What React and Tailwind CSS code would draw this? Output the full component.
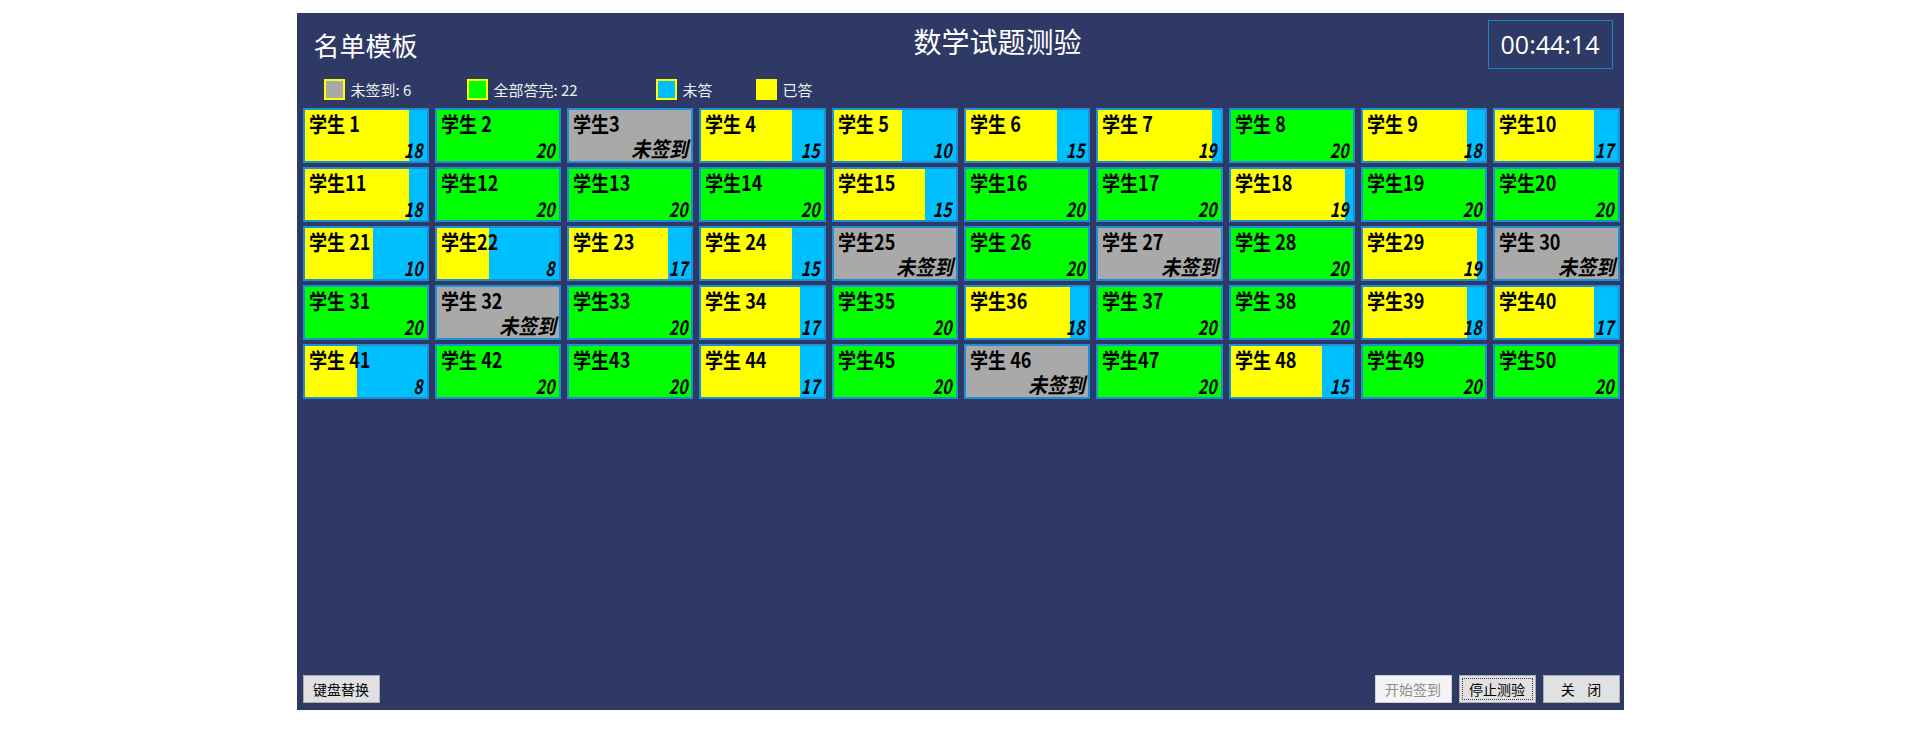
import React from "react";

const CJK = { fontFamily: '"Noto Sans CJK SC", "Noto Sans", sans-serif' };

// width of the yellow "answered" bar inside a card, by score
const barWidth = { 8: 52, 10: 68, 15: 91, 17: 99, 18: 104, 19: 114 };

const students = [
  ["学生 1", "y", 18], ["学生 2", "g", 20], ["学生3", "x"], ["学生 4", "y", 15], ["学生 5", "y", 10],
  ["学生 6", "y", 15], ["学生 7", "y", 19], ["学生 8", "g", 20], ["学生 9", "y", 18], ["学生10", "y", 17],
  ["学生11", "y", 18], ["学生12", "g", 20], ["学生13", "g", 20], ["学生14", "g", 20], ["学生15", "y", 15],
  ["学生16", "g", 20], ["学生17", "g", 20], ["学生18", "y", 19], ["学生19", "g", 20], ["学生20", "g", 20],
  ["学生 21", "y", 10], ["学生22", "y", 8], ["学生 23", "y", 17], ["学生 24", "y", 15], ["学生25", "x"],
  ["学生 26", "g", 20], ["学生 27", "x"], ["学生 28", "g", 20], ["学生29", "y", 19], ["学生 30", "x"],
  ["学生 31", "g", 20], ["学生 32", "x"], ["学生33", "g", 20], ["学生 34", "y", 17], ["学生35", "g", 20],
  ["学生36", "y", 18], ["学生 37", "g", 20], ["学生 38", "g", 20], ["学生39", "y", 18], ["学生40", "y", 17],
  ["学生 41", "y", 8], ["学生 42", "g", 20], ["学生43", "g", 20], ["学生 44", "y", 17], ["学生45", "g", 20],
  ["学生 46", "x"], ["学生47", "g", 20], ["学生 48", "y", 15], ["学生49", "g", 20], ["学生50", "g", 20],
];

const Legend = ({ color, label, w }) => (
  <div className={`flex items-center ${w}`}>
    <div className={`w-[21px] h-[21px] border-2 border-[#ffff00] ${color}`} />
    <span className="ml-[6px] text-[15px] text-[#eef0f6] leading-none">{label}</span>
  </div>
);

const Card = ({ name, state, score }) => {
  const bg =
    state === "g" ? "bg-[#00ff00]" : state === "x" ? "bg-[#a9a9a9]" : "bg-[#00bfff]";
  return (
    <div className={`relative h-[55px] border-2 border-[#1c8fd6] ${bg}`}>
      {state === "y" && (
        <div className="absolute left-0 top-0 bottom-0 bg-[#ffff00]" style={{ width: barWidth[score] }} />
      )}
      <div className="absolute left-[4px] top-[1px] origin-left scale-x-[0.86] text-[21px] font-bold text-black whitespace-pre leading-[24px]">
        {name}
      </div>
      {state === "x" ? (
        <div className="absolute right-[3px] bottom-[2px] origin-right scale-x-[0.9] text-[21px] font-bold italic text-black leading-[22px]">
          未签到
        </div>
      ) : (
        <div className="absolute right-[4px] bottom-[1px] origin-right scale-x-[0.8] text-[20px] font-bold italic text-black leading-[20px]">
          {score}
        </div>
      )}
    </div>
  );
};

const Btn = ({ children, disabled, focus }) => (
  <div
    className={`relative w-[77px] h-[28px] flex items-center justify-center text-[14px] border ${
      disabled ? "bg-[#f4f4f4] border-[#cfcfcf] text-[#8d8d8d]" : "bg-[#e1e1e1] border-[#adadad] text-black"
    }`}
  >
    {focus && <div className="absolute inset-[2px] border border-dotted border-[#3c3c3c]" />}
    {children}
  </div>
);

export default function App() {
  return (
    <div className="w-[1920px] h-[731px] bg-white pt-[13px]" style={CJK}>
      <div className="mx-auto w-[1327px] h-[697px] bg-[#2e3a65] flex flex-col">
        {/* header */}
        <div className="flex items-start h-[56px]">
          <div className="w-[617px] pl-[17px] pt-[19px] text-[26px] leading-none text-white">名单模板</div>
          <div className="flex-1 pt-[14px] text-[28px] leading-none text-white">数学试题测验</div>
          <div
            className="mt-[7px] mr-[11px] w-[125px] h-[49px] border border-[#1b7fc4] flex items-center justify-center text-[25px] text-white"
            style={{ fontFamily: '"Open Sans", "Liberation Sans", sans-serif' }}
          >
            00:44:14
          </div>
        </div>

        {/* legend */}
        <div className="flex items-center mt-[10px] h-[21px] pl-[27px]">
          <Legend color="bg-[#a9a9a9]" label="未签到: 6" w="w-[143px]" />
          <Legend color="bg-[#00ff00]" label="全部答完: 22" w="w-[189px]" />
          <Legend color="bg-[#00bfff]" label="未答" w="w-[100px]" />
          <Legend color="bg-[#ffff00]" label="已答" w="w-[100px]" />
        </div>

        {/* students */}
        <div className="grid grid-cols-10 gap-x-[6px] gap-y-[4px] mt-[8px] pl-[6px] pr-[4px]">
          {students.map(([name, state, score]) => (
            <Card key={name} name={name} state={state} score={score} />
          ))}
        </div>

        <div className="flex-1" />

        {/* footer */}
        <div className="flex items-center justify-between pl-[6px] pr-[4px] pb-[7px]">
          <Btn>键盘替换</Btn>
          <div className="flex gap-[7px]">
            <Btn disabled>开始签到</Btn>
            <Btn focus>停止测验</Btn>
            <Btn>关&nbsp;&nbsp;&nbsp;&nbsp;闭</Btn>
          </div>
        </div>
      </div>
    </div>
  );
}
